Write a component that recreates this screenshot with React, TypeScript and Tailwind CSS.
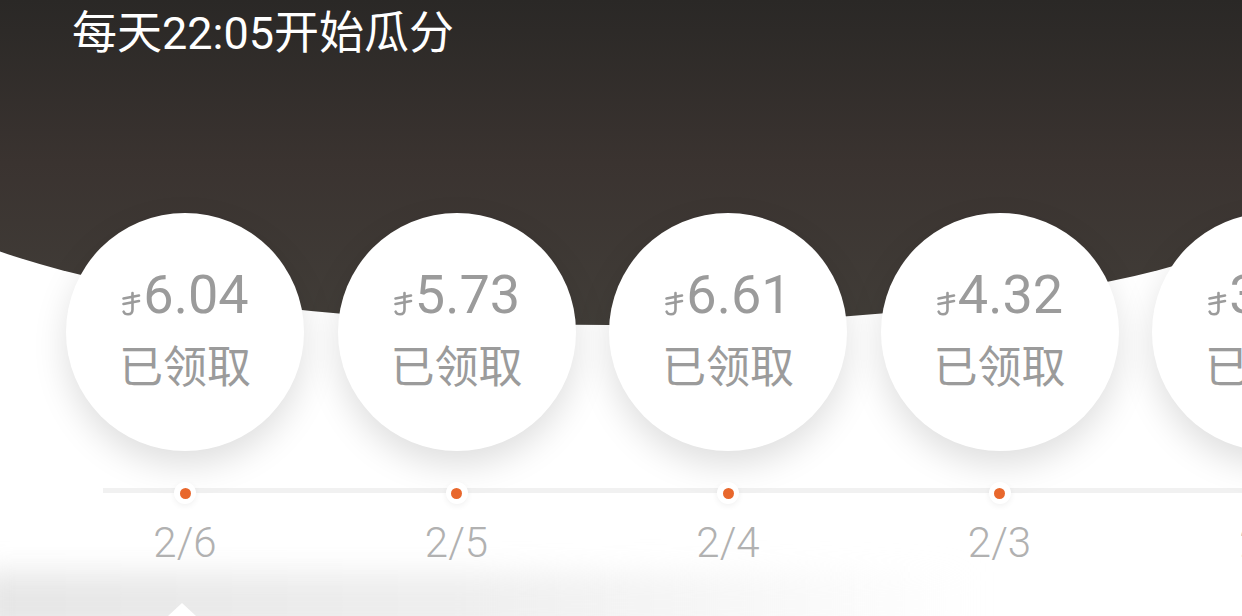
import React from "react";

const days = [
  { amount: "6.04", date: "2/6" },
  { amount: "5.73", date: "2/5" },
  { amount: "6.61", date: "2/4" },
  { amount: "4.32", date: "2/3" },
  { amount: "3.95", date: "2/2" },
];

function Coin() {
  return (
    <svg width="20" height="25" viewBox="0 0 20 25" className="mb-[6px] mr-[2px] shrink-0" aria-hidden="true">
      <g fill="none" stroke="#9b9b9b" strokeWidth="2.6" strokeLinecap="round">
        <path d="M2.5 7.5 L18 4.5" />
        <path d="M2.5 13 L18 10" />
        <path d="M11.5 2 V18.5 Q11.5 23.3 7 23.3 Q3.6 23.3 2.6 20.6" />
      </g>
    </svg>
  );
}

export default function App() {
  return (
    <div
      className="relative h-[616px] w-[1242px] overflow-hidden bg-white"
      style={{ fontFamily: "Roboto, 'Noto Sans CJK SC', sans-serif" }}
    >
      <div className="absolute bottom-[-20px] left-[-20px] h-[64px] w-[1000px] bg-gradient-to-r from-[#e6e6e6] via-[#efefef] to-transparent blur-[14px]" />

      <div className="ml-[-99px] h-[325px] w-[1418px] rounded-b-[709px_150px] bg-gradient-to-b from-[#2a2826] via-[#3a3330] to-[#423e39] pl-[171px] pt-[6px]">
        <h1 className="text-[45px] font-normal leading-[56px] text-white">每天22:05开始瓜分</h1>
      </div>

      <div className="relative -mt-[112px] flex gap-[33.5px] pl-[66px]">
        <div className="absolute left-[103px] right-0 top-[275px] h-[5px] bg-[#f1f1f1]" />
        {days.map((d) => (
          <div key={d.date} className="relative flex w-[238px] shrink-0 flex-col items-center">
            <div className="flex h-[238px] w-[238px] flex-col items-center justify-center rounded-full bg-white text-[#9b9b9b] shadow-[0_14px_34px_rgba(0,0,0,0.13)]">
              <div className="-mt-[6px] flex items-end text-[54px] leading-none">
                <Coin />
                <span>{d.amount}</span>
              </div>
              <div className="mt-[24px] text-[44px] leading-none">已领取</div>
            </div>
            <div className="mt-[31px] flex h-[22px] w-[22px] items-center justify-center rounded-full bg-white shadow-[0_2px_6px_rgba(0,0,0,0.06)]">
              <div className="h-[11px] w-[11px] rounded-full bg-[#e8672c]" />
            </div>
            <div className="mt-[18px] text-[42px] font-light leading-none text-[#b1b1b1]">{d.date}</div>
          </div>
        ))}
      </div>

      <div className="absolute bottom-0 left-[168px] h-0 w-0 border-x-[14px] border-b-[13px] border-x-transparent border-b-white" />
    </div>
  );
}
